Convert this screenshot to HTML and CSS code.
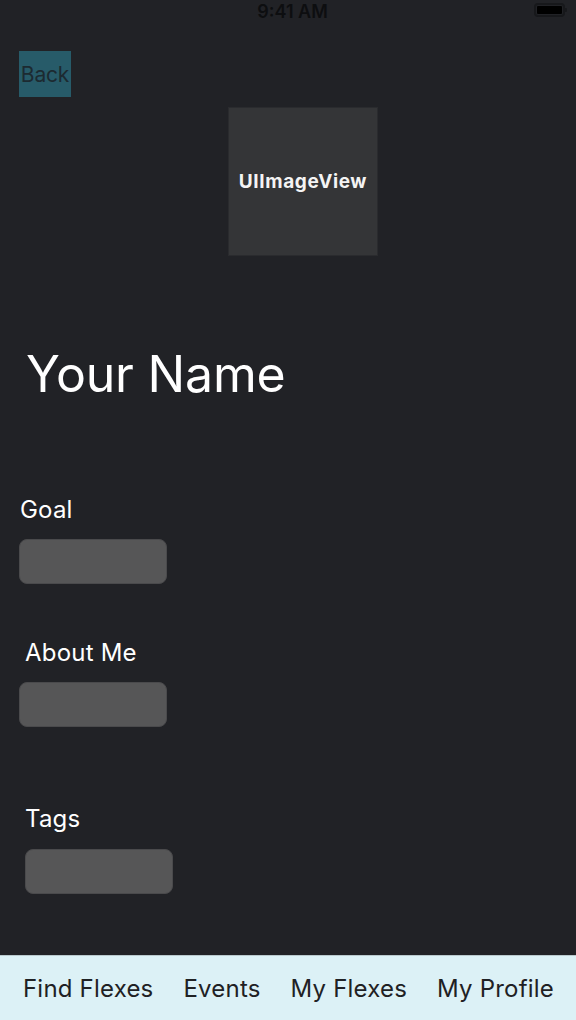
FILE: index.html
```html
<!DOCTYPE html>
<html>
<head>
<meta charset="utf-8">
<link rel="stylesheet" href="styles.css">
</head>
<body>
<div class="screen">
  <div class="status">
    <span class="time">9:41 AM</span>
    <span class="battery"><span class="battery-fill"></span></span>
  </div>
  <main class="content">
    <button class="back">Back</button>
    <div class="avatar">UIImageView</div>
    <h1 class="name">Your Name</h1>
    <section class="field field-goal">
      <div class="label">Goal</div>
      <div class="box"></div>
    </section>
    <section class="field field-about">
      <div class="label">About Me</div>
      <div class="box"></div>
    </section>
    <section class="field field-tags">
      <div class="label">Tags</div>
      <div class="box"></div>
    </section>
  </main>
  <nav class="tabbar">
    <span class="tab">Find Flexes</span>
    <span class="tab">Events</span>
    <span class="tab">My Flexes</span>
    <span class="tab">My Profile</span>
  </nav>
</div>
</body>
</html>
```
FILE: styles.css
```css
html, body {
  margin: 0;
  padding: 0;
  background: #212226;
}
.screen {
  width: 576px;
  height: 1020px;
  display: flex;
  flex-direction: column;
  font-family: Inter, "Liberation Sans", sans-serif;
  background: #212226;
  color: #ffffff;
  overflow: hidden;
}
.status {
  position: relative;
  height: 24px;
  display: flex;
  justify-content: center;
  align-items: center;
}
.time {
  font-size: 18px;
  font-weight: 600;
  color: #0d0e10;
  margin-top: -2px;
  margin-left: 9px;
}
.battery {
  position: absolute;
  right: 11px;
  top: 3px;
  width: 31px;
  height: 14px;
  border: 2px solid #17181b;
  border-radius: 4px;
  box-sizing: border-box;
  padding: 1px;
  display: flex;
}
.battery::after {
  content: "";
  position: absolute;
  right: -4px;
  top: 3px;
  width: 2px;
  height: 4px;
  background: #17181b;
  border-radius: 0 1px 1px 0;
}
.battery-fill {
  flex: 1;
  background: #000;
  border-radius: 1px;
}
.content {
  flex: 1;
  display: flex;
  flex-direction: column;
  align-items: flex-start;
}
.back {
  margin: 27px 0 0 19px;
  width: 52px;
  height: 46px;
  padding: 0;
  border: none;
  background: #275b69;
  color: #1c2a31;
  font-family: Inter, "Liberation Sans", sans-serif;
  font-size: 21px;
  font-weight: 400;
  letter-spacing: -0.2px;
  display: flex;
  align-items: center;
  justify-content: center;
}
.avatar {
  margin: 10px 0 0 228px;
  width: 150px;
  height: 149px;
  box-sizing: border-box;
  background: #343537;
  border: 1px solid #2a2b2e;
  display: flex;
  align-items: center;
  justify-content: center;
  font-size: 19px;
  font-weight: 700;
  color: #f4f4f4;
  letter-spacing: 0.6px;
}
.name {
  margin: 88px 0 0 26px;
  font-size: 50px;
  font-weight: 400;
  line-height: 60px;
  color: #ffffff;
  letter-spacing: -0.2px;
}
.field {
  display: flex;
  flex-direction: column;
}
.label {
  font-size: 24px;
  font-weight: 400;
  line-height: 30px;
  color: #ffffff;
  letter-spacing: 0.2px;
}
.box {
  width: 148px;
  height: 45px;
  background: #565657;
  border: 1px solid #4a4a4c;
  box-sizing: border-box;
  border-radius: 8px;
}
.field-goal {
  margin: 91px 0 0 19px;
}
.field-goal .label {
  margin-left: 1px;
  margin-bottom: 14px;
}
.field-about {
  margin: 54px 0 0 19px;
}
.field-about .label {
  margin-left: 6px;
  margin-bottom: 14px;
}
.field-tags {
  margin: 77px 0 0 25px;
}
.field-tags .label {
  margin-bottom: 15px;
}
.tabbar {
  height: 64px;
  border-top: 1px solid #b9c9cd;
  background: #dcf1f6;
  display: flex;
  align-items: center;
  padding: 0 0 0 23px;
  gap: 30px;
}
.tab {
  font-size: 24px;
  font-weight: 400;
  color: #1f2124;
  letter-spacing: 0.2px;
}
```
